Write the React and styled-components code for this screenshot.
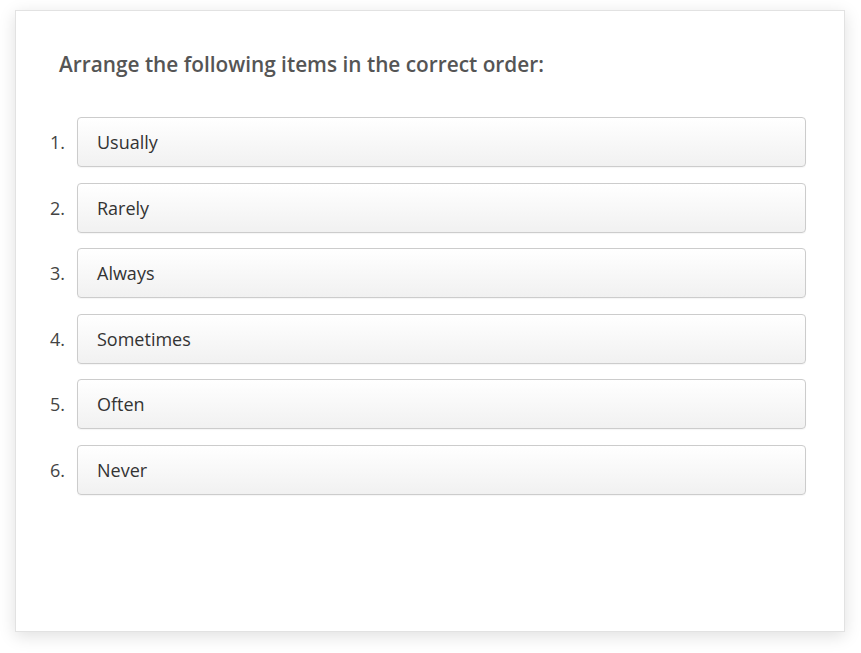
import React from "react";
import styled, { createGlobalStyle } from "styled-components";

const Global = createGlobalStyle`
  html, body { margin: 0; padding: 0; background: #ffffff; }
  body { font-family: "Open Sans", "Liberation Sans", sans-serif; }
`;

const Page = styled.div`
  padding: 10px 16px 22px 15px;
`;

const Card = styled.div`
  box-sizing: border-box;
  width: 830px;
  height: 622px;
  background: #fff;
  border: 1px solid #e2e2e2;
  box-shadow: 0 4px 16px rgba(0, 0, 0, 0.13);
  padding: 39px 38px 0 34px;
`;

const Title = styled.h1`
  margin: 0 0 39px 9px;
  font-size: 20.8px;
  line-height: 28px;
  font-weight: 600;
  color: #555555;
`;

const List = styled.ol`
  list-style: none;
  margin: 0;
  padding: 0;
  display: flex;
  flex-direction: column;
  gap: 15.6px;
`;

const Row = styled.li`
  display: grid;
  grid-template-columns: 27px 1fr;
  align-items: center;
`;

const Num = styled.span`
  font-size: 18px;
  color: #444;
`;

const Item = styled.div`
  box-sizing: border-box;
  height: 50px;
  display: flex;
  align-items: center;
  padding: 0 19px;
  border: 1px solid #cccccc;
  border-radius: 4px;
  background: linear-gradient(#ffffff, #f1f1f1);
  box-shadow: 0 1px 1px rgba(0, 0, 0, 0.04);
  font-size: 18px;
  color: #333;
`;

const items = ["Usually", "Rarely", "Always", "Sometimes", "Often", "Never"];

export default function App() {
  return (
    <>
      <Global />
      <Page>
        <Card>
          <Title>Arrange the following items in the correct order:</Title>
          <List>
            {items.map((t, i) => (
              <Row key={t}>
                <Num>{i + 1}.</Num>
                <Item>{t}</Item>
              </Row>
            ))}
          </List>
        </Card>
      </Page>
    </>
  );
}
